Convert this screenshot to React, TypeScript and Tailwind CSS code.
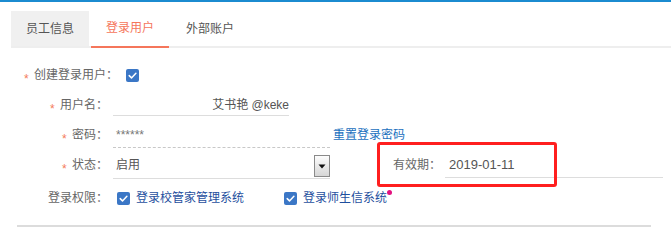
import type { ReactNode } from 'react'

const FONT = 'font-["Liberation_Sans","Noto_Sans_CJK_SC",sans-serif]'

function Star() {
  return (
    <span className="inline-block w-[5px] mr-[5px] text-[12px] text-[#f47a5a] translate-y-[4px]">*</span>
  )
}

function Check({ className = '' }: { className?: string }) {
  return (
    <span className={`inline-flex items-center justify-center w-[13px] h-[13px] rounded-[2px] bg-[#3b77c6] ${className}`}>
      <svg width="11" height="11" viewBox="0 0 11 11" fill="none">
        <path d="M2.2 5.6 L4.5 7.9 L8.9 3.2" stroke="#fff" strokeWidth="1.5" strokeLinecap="round" strokeLinejoin="round" />
      </svg>
    </span>
  )
}

function Label({ star, children }: { star?: boolean; children: ReactNode }) {
  return (
    <div className="w-[108px] shrink-0 flex justify-end items-center text-[12px] text-[#666]">
      {star && <Star />}
      <span>{children}</span>
    </div>
  )
}

export default function App() {
  return (
    <div className={`relative w-[671px] h-[227px] overflow-hidden bg-white ${FONT}`}>
      {/* top accent */}
      <div className="h-[2px] bg-[#1b8bd0]" />

      {/* tabs */}
      <div className="mt-[9px] ml-[11px] flex gap-[2px] border-b-2 border-[#eeeeee]">
        <div className="w-[78px] h-[35px] flex items-center justify-center bg-[#f0f0f0] text-[12px] text-[#555]">员工信息</div>
        <div className="w-[78px] h-[37px] -mb-[2px] border-b-2 border-[#f5765b] flex items-center justify-center pb-[2px] text-[12px] text-[#f5765b]">登录用户</div>
        <div className="w-[78px] h-[35px] flex items-center justify-center text-[12px] text-[#555]">外部账户</div>
      </div>

      {/* form */}
      <div className="mt-[12px]">
        <div className="h-[30px] flex items-center pl-[24px] text-[12px] text-[#666]">
          <Star />
          <span>创建登录用户：</span>
          <Check className="ml-[8px]" />
        </div>

        <div className="h-[30px] flex items-center">
          <Label star>用户名：</Label>
          <div className="ml-[5px] w-[176px] h-[22px] border-b border-[#dddddd] flex items-center justify-end text-[12px] text-[#555]">
            艾书艳 @keke
          </div>
        </div>

        <div className="h-[30px] flex items-center">
          <Label star>密码：</Label>
          <div className="ml-[5px] w-[217px] h-[26px] border-b border-dashed border-[#c8c8c8] flex items-center pl-[3px] text-[12px] text-[#777]">
            ******
          </div>
          <span className="ml-[3px] text-[12px] text-[#1a70be]">重置登录密码</span>
        </div>

        <div className="h-[30px] flex items-center">
          <Label star>状态：</Label>
          <div className="ml-[5px] w-[217px] h-[28px] border-b border-[#dddddd] flex items-center pl-[3px] text-[12px] text-[#555]">
            <span className="flex-1">启用</span>
            <span className="self-end mb-[1px] w-[16px] h-[22px] border border-[#8a8a8a] bg-gradient-to-b from-[#fdfdfd] to-[#d6d6d6] flex items-center justify-center">
              <svg width="8" height="5" viewBox="0 0 8 5">
                <path d="M0.5 0.5 L7.5 0.5 L4 4.5 Z" fill="#111" />
              </svg>
            </span>
          </div>
          <span className="ml-[63px] text-[12px] text-[#666]">有效期：</span>
          <div className="ml-[4px] w-[218px] h-[26px] border-b border-[#dddddd] flex items-center pl-[4px] text-[13px] text-[#555]">
            2019-01-11
          </div>
        </div>

        <div className="mt-[3px] h-[30px] flex items-center">
          <Label>登录权限：</Label>
          <Check className="ml-[9px]" />
          <span className="ml-[6px] text-[12px] text-[#1f4f9e]">登录校管家管理系统</span>
          <Check className="ml-[40px]" />
          <span className="relative ml-[6px] text-[12px] text-[#1f4f9e]">
            登录师生信系统
            <span className="absolute -right-[5px] top-[1px] w-[5px] h-[5px] rounded-full bg-[#e3117f]" />
          </span>
        </div>
      </div>

      <div className="mt-[12px] ml-[17px] w-[634px] h-[2px] bg-[#dcdcdc]" />

      {/* annotation box */}
      <div className="absolute left-[377px] top-[142px] w-[180px] h-[45px] border-[3px] border-[#ff1f1f] rounded-[3px]" />
    </div>
  )
}
